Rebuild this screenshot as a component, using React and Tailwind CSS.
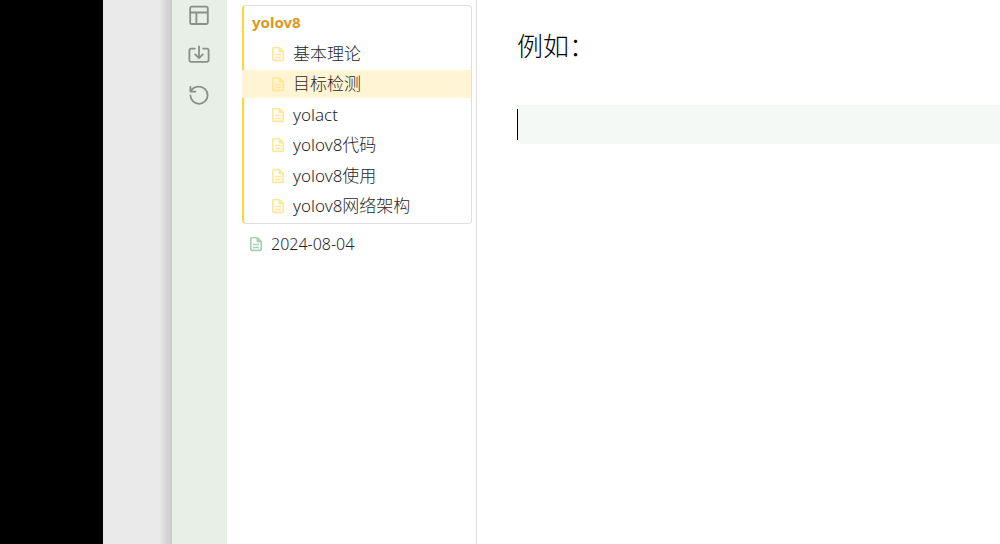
const notes = ["基本理论", "目标检测", "yolact", "yolov8代码", "yolov8使用", "yolov8网络架构"];

function NoteIcon({ className }) {
  return (
    <svg viewBox="0 0 14 16" className={`h-4 w-3.5 shrink-0 ${className}`} fill="none" stroke="currentColor" strokeWidth="1.6" aria-hidden="true">
      <path d="M2.6 1.8H8.4L12.2 5.6V13.6a.8.8 0 0 1-.8.8H2.6a.8.8 0 0 1-.8-.8V2.6a.8.8 0 0 1 .8-.8Z" strokeLinejoin="round" />
      <path d="M8 1.6V6H12.4Z" fill="currentColor" strokeWidth="0.8" />
      <path d="M4 8.5H10M4 11.5H10" strokeWidth="1.3" />
    </svg>
  );
}

function ToolButton({ label, children }) {
  return (
    <button type="button" aria-label={label} className="flex h-6 w-6 items-center justify-center text-[#8b8e8b]">
      <svg viewBox="0 0 24 24" className="h-6 w-6" fill="none" stroke="currentColor" strokeWidth="1.8" strokeLinecap="round" strokeLinejoin="round" aria-hidden="true">
        {children}
      </svg>
    </button>
  );
}

export default function App() {
  return (
    <div className="flex h-screen overflow-hidden bg-white font-['Noto_Sans','Noto_Sans_CJK_SC',sans-serif] font-light text-[#1f1f1f]">
      <div className="w-[103px] shrink-0 bg-black" />
      <div className="flex w-[69px] shrink-0 justify-end bg-[#eaeaea]">
        <div className="w-3 bg-linear-to-r from-[#e6e6e6] to-[#cacaca]" />
      </div>
      <nav aria-label="Tools" className="flex w-[55px] shrink-0 flex-col items-center gap-4 bg-[#e8efe7] pt-1 pr-0.5">
        <ToolButton label="Layout">
          <path d="M4.8 2.6H19.2A1.6 1.6 0 0 1 20.8 4.2V18.4A1.6 1.6 0 0 1 19.2 20H4.8A1.6 1.6 0 0 1 3.2 18.4V4.2A1.6 1.6 0 0 1 4.8 2.6ZM3.2 8.5H20.8M9.4 8.5V20" />
        </ToolButton>
        <ToolButton label="Import">
          <path d="M7.8 4.6H4.1a1.7 1.7 0 0 0-1.7 1.7V16.1a1.7 1.7 0 0 0 1.7 1.7H19.9a1.7 1.7 0 0 0 1.7-1.7V6.3a1.7 1.7 0 0 0-1.7-1.7H16.2M12 2.5V14M8.2 10.4 12 14.2 15.8 10.4" />
        </ToolButton>
        <ToolButton label="Refresh">
          <path d="M3.4 2.8V7.6H8.4M3.6 7.5C5.2 4.6 8.3 2.6 12 2.6a8.6 8.6 0 1 1-8.6 8.8" />
        </ToolButton>
      </nav>
      <aside className="w-[250px] shrink-0 border-r border-[#dedede] pt-[5px] pr-1 pl-[15px]">
        <section className="rounded border border-l-2 border-[#dedede] border-l-[#ffd43b] pb-[3px]">
          <h2 className="h-[34px] pl-2 text-[15px] leading-8 font-bold text-[#dc981e]">yolov8</h2>
          <ul className="-ml-0.5 flex h-[180px] flex-col justify-between">
            {notes.map((note, index) => (
              <li key={note}>
                <a
                  href={`#note-${index}`}
                  aria-current={index === 1 ? "page" : undefined}
                  className={`flex h-7 items-center gap-2 pl-[29px] text-[17px] leading-7 ${index === 1 ? "bg-[#fff4d3]" : ""}`}
                >
                  <NoteIcon className="text-[#ffe796]" />
                  {note}
                </a>
              </li>
            ))}
          </ul>
        </section>
        <a href="#2024-08-04" className="mt-1.5 flex h-7 items-center gap-2 pl-[7px] text-base leading-7">
          <NoteIcon className="text-[#a5d2b6]" />
          2024-08-04
        </a>
      </aside>
      <main className="min-w-0 flex-1 pt-[26px] pl-10 text-[26px] leading-10 text-black">
        <p>例如：</p>
        <input
          aria-label="Note text"
          className="mt-[39px] block h-[39px] w-full bg-[#f4f9f6] bg-linear-to-r from-black to-black bg-[length:1px_31px] bg-[position:0_4px] bg-no-repeat px-0.5 outline-none"
        />
      </main>
    </div>
  );
}
